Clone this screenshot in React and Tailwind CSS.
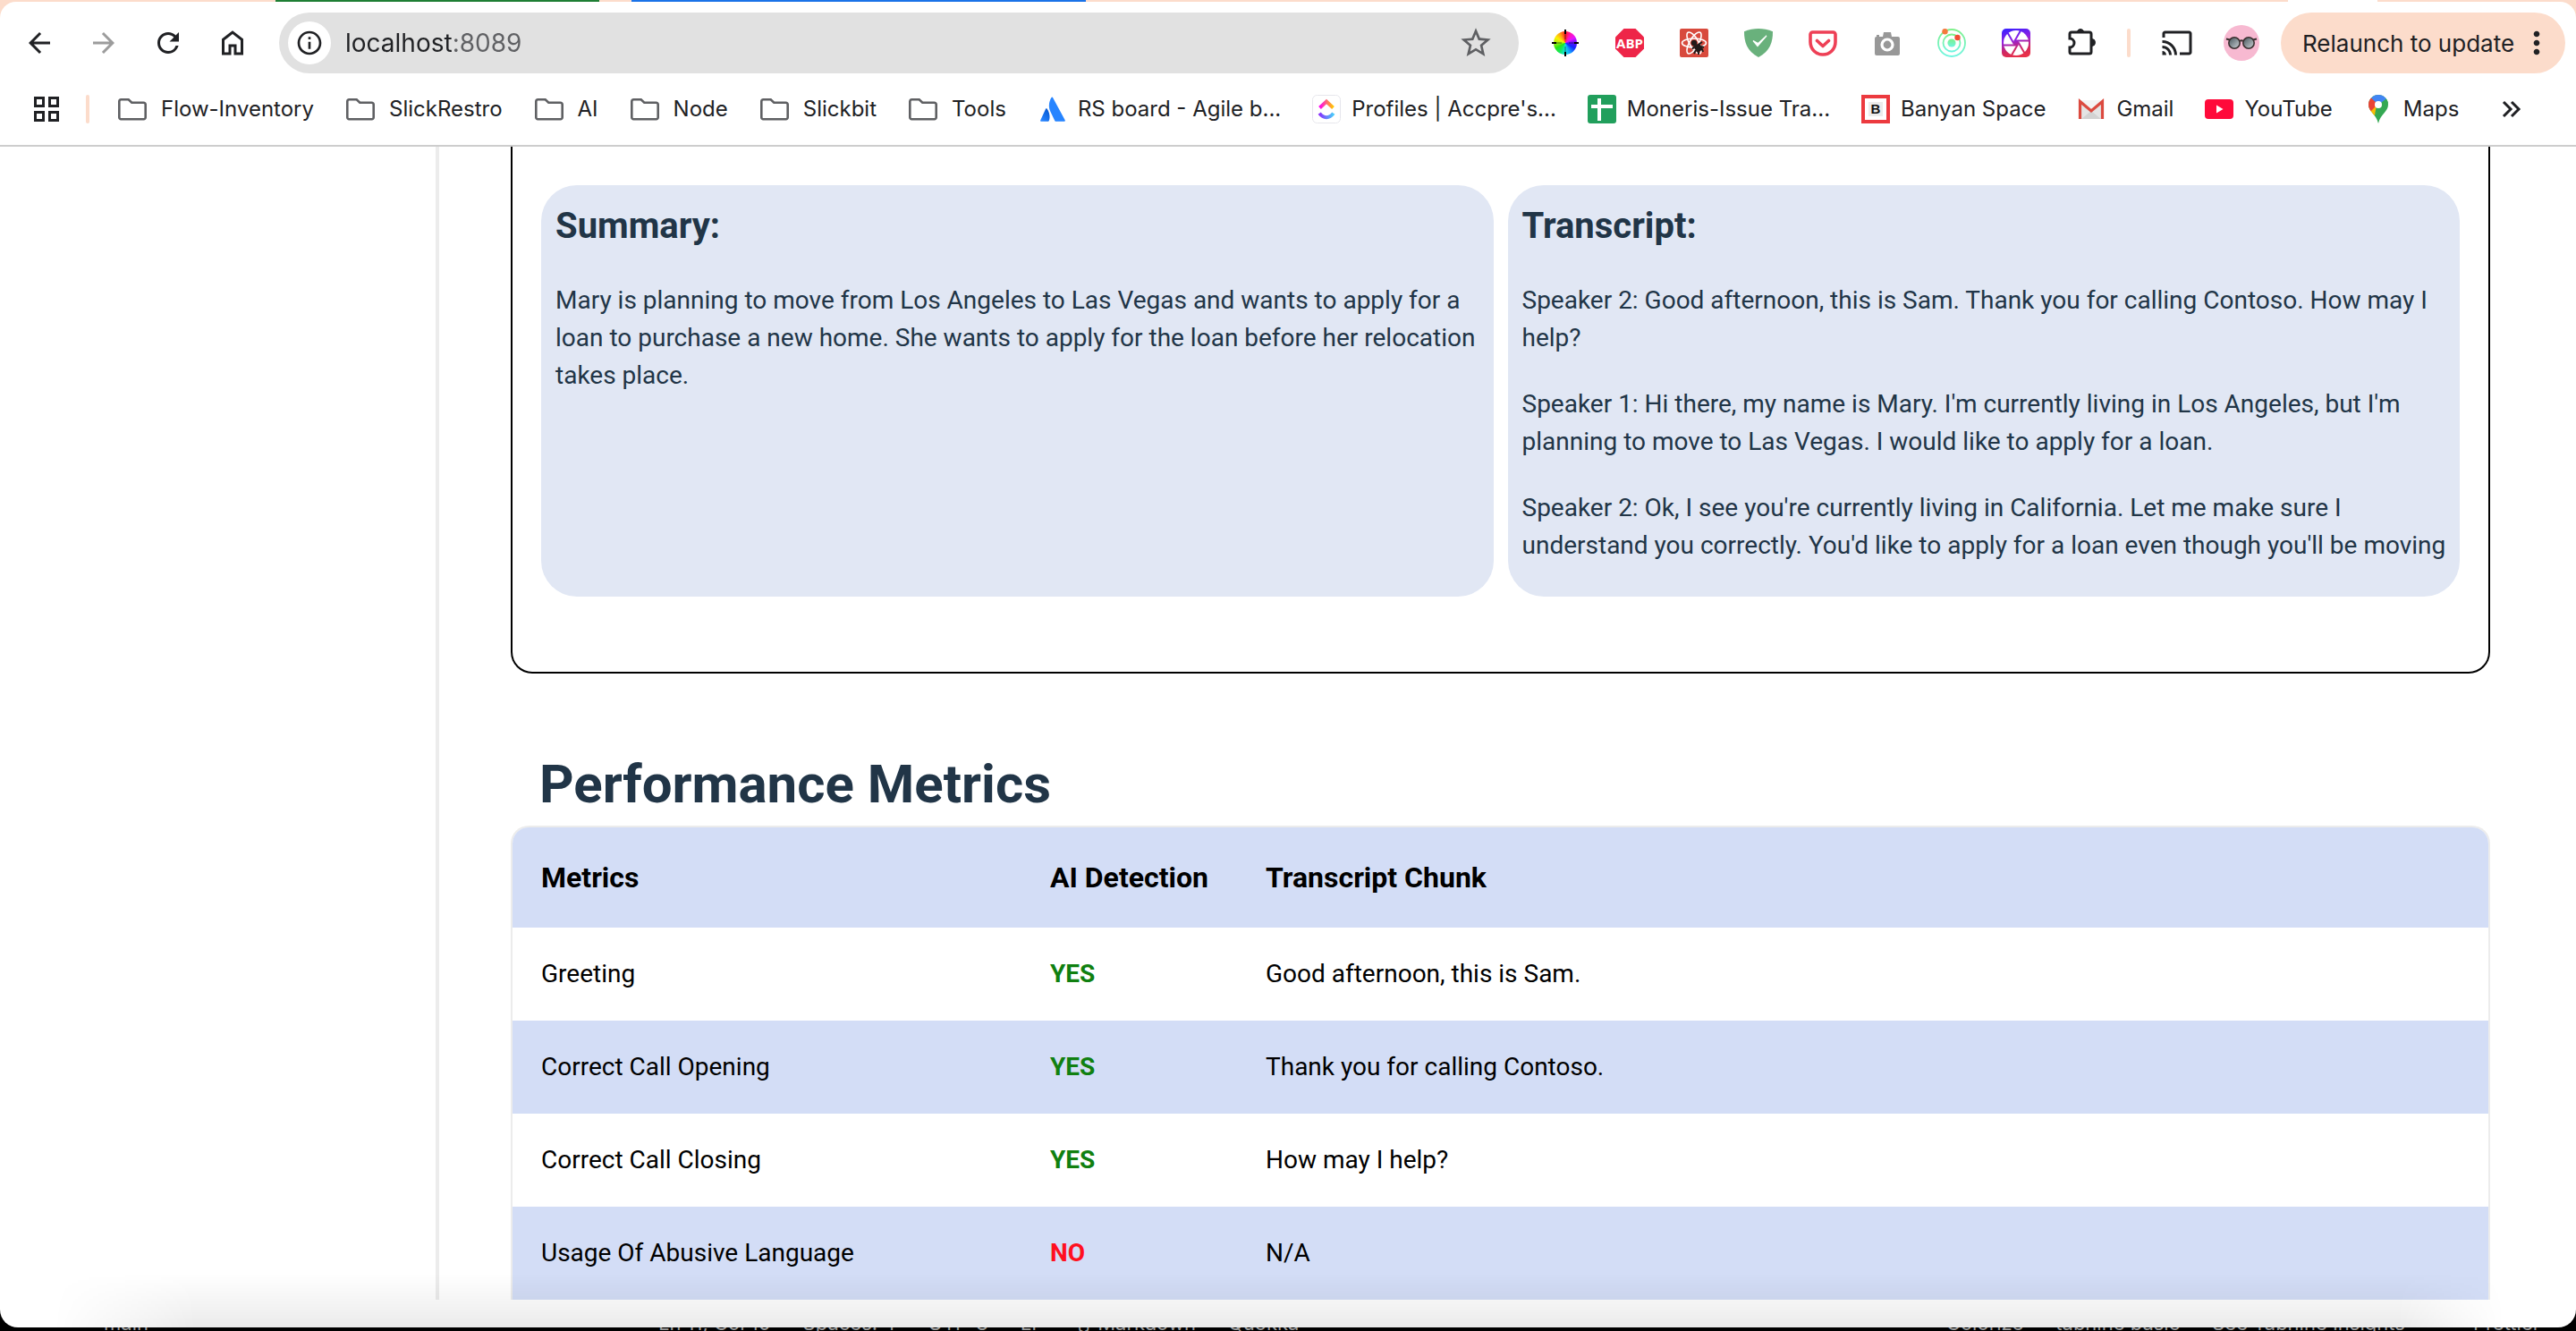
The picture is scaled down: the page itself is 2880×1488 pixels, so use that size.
import React from "react";
import { MdArrowBack, MdArrowForward, MdRefresh, MdInfoOutline, MdStarBorder, MdCast, MdMoreVert } from "react-icons/md";

/* ---------- toolbar icons ---------- */

const HomeIcon = () => (
  <svg viewBox="0 0 24 24" className="size-9" fill="currentColor" aria-hidden="true">
    <path d="M6 19h3v-6h6v6h3v-9l-6-4.6L6 10v9Zm-2 2V9l8-6.2L20 9v12h-7v-6h-2v6H4Z" />
  </svg>
);

const ColorWheelIcon = () => (
  <span className="grid size-8 place-items-center *:col-start-1 *:row-start-1" aria-hidden="true">
    <span className="size-[26px] rounded-full bg-[conic-gradient(#ff2020,#ff14b4,#e614ff,#5a14ff,#1428ff,#1496ff,#14e6e6,#14e664,#28e614,#a0f014,#fff000,#ffa014,#ff2020)]" />
    <svg viewBox="0 0 32 32" className="size-8">
      <path d="M16 1v5M16 26v5M1 16h5M26 16h5" stroke="#000" strokeWidth="2" />
      <path d="M16 6v6M16 20v6M6 16h6M20 16h6" stroke="#000" strokeOpacity=".5" strokeWidth="1" />
    </svg>
  </span>
);

const AdblockIcon = () => (
  <svg viewBox="0 0 32 32" className="size-8" aria-hidden="true">
    <path d="M9.500 0h13L32 9.500v13L22.500 32h-13L0 22.500v-13Z" fill="#ee2548" />
    <text x="16" y="22" textAnchor="middle" fill="#fff" className="font-['Open_Sans',sans-serif] text-[15px] font-bold">ABP</text>
  </svg>
);

const ReactSightIcon = () => (
  <svg viewBox="0 0 32 32" className="size-8" aria-hidden="true">
    <rect width="32" height="32" rx="2" fill="#d84a3d" />
    <g fill="none" stroke="#fff" strokeWidth="1.600">
      <ellipse cx="16" cy="16" rx="13.500" ry="5" />
      <ellipse cx="16" cy="16" rx="13.500" ry="5" transform="rotate(60 16 16)" />
      <ellipse cx="16" cy="16" rx="13.500" ry="5" transform="rotate(120 16 16)" />
    </g>
    <circle cx="16" cy="16" r="3.200" fill="#1f1a1a" />
    <path d="M15 20l7-4 4 7-6 4Z" fill="#1f1a1a" />
    <path d="M16 20l-2 3M18 24l-2 4M21 26l0 3M22 17l3-2M24 20l3 1M25 23l1 3" stroke="#1f1a1a" strokeWidth="2" />
  </svg>
);

const ShieldIcon = () => (
  <svg viewBox="0 0 32 32" className="size-8" aria-hidden="true">
    <path d="M16 0c5 0 11 1.200 16 3.200 0 12-3 22-16 28.800C3 25.200 0 15.200 0 3.200 5 1.200 11 0 16 0Z" fill="#69b17c" />
    <path d="M10 13.500l5 6L25 8l-9.600 8.600Z" fill="#fff" stroke="#fff" strokeWidth="1.200" />
  </svg>
);

const PocketIcon = () => (
  <svg viewBox="0 0 32 32" className="size-8" fill="none" stroke="#ee4056" aria-hidden="true">
    <path d="M4.500 4h23A2.500 2.500 0 0 1 30 6.500V15a14 14 0 0 1-28 0V6.500A2.500 2.500 0 0 1 4.500 4Z" strokeWidth="3.600" />
    <path d="M9.500 13.500l6.500 6 6.500-6" strokeWidth="3.600" strokeLinecap="round" strokeLinejoin="round" />
  </svg>
);

const CameraIcon = () => (
  <svg viewBox="0 0 32 32" className="size-8" aria-hidden="true">
    <path d="M4 9V7h3v2h4l1-5h8l1 5h7a2 2 0 0 1 2 2v17a2 2 0 0 1-2 2H4a2 2 0 0 1-2-2V11a2 2 0 0 1 2-2Z" fill="#989898" />
    <circle cx="16" cy="18" r="6" fill="none" stroke="#fff" strokeWidth="3.200" />
  </svg>
);

const OrbitIcon = () => (
  <svg viewBox="0 0 32 32" className="size-8" aria-hidden="true">
    <defs>
      <linearGradient id="orbit" x1="0" y1="0" x2="0" y2="1">
        <stop offset="0" stopColor="#7df08a" />
        <stop offset="1" stopColor="#6ff5e0" />
      </linearGradient>
    </defs>
    <circle cx="16" cy="16" r="15" fill="none" stroke="url(#orbit)" strokeWidth="1.800" />
    <circle cx="16" cy="16" r="9.500" fill="none" stroke="url(#orbit)" strokeWidth="1.800" />
    <circle cx="16" cy="16" r="4.600" fill="url(#orbit)" />
    <circle cx="8.500" cy="3.200" r="3.200" fill="#f4793c" />
    <circle cx="22.500" cy="10" r="3.200" fill="#f04e33" />
  </svg>
);

const ApertureIcon = () => (
  <svg viewBox="0 0 32 32" className="size-8" aria-hidden="true">
    <defs>
      <linearGradient id="aperture" gradientUnits="userSpaceOnUse" x1="8" y1="0" x2="16" y2="32">
        <stop offset="0" stopColor="#3d20ff" />
        <stop offset=".4" stopColor="#9020e0" />
        <stop offset=".75" stopColor="#d02860" />
        <stop offset="1" stopColor="#e83048" />
      </linearGradient>
      <mask id="blades">
        <circle cx="16" cy="16" r="14" fill="#fff" />
        <circle cx="16" cy="16" r="3" fill="#000" />
        {[0, 60, 120, 180, 240, 300].map((r) => (
          <path key={r} transform={`rotate(${r} 16 16)`} d="M16 18.500H1" stroke="#000" strokeWidth="2" />
        ))}
      </mask>
    </defs>
    <rect width="32" height="32" rx="5" fill="url(#aperture)" />
    <rect width="32" height="32" fill="#fff" mask="url(#blades)" />
  </svg>
);

const PuzzleIcon = () => (
  <svg viewBox="0 0 36 36" className="size-9" aria-hidden="true">
    <path d="M8 6h20a2 2 0 0 1 2 2v20a2 2 0 0 1-2 2H8a2 2 0 0 1-2-2v-5a5 5 0 0 0 0-10V8a2 2 0 0 1 2-2Z" fill="none" stroke="#202124" strokeWidth="3" />
    <path d="M14.500 5a3.700 3.700 0 0 1 7 0ZM30.500 13.500a4 4 0 0 1 0 8Z" fill="#202124" stroke="#202124" />
  </svg>
);

const GlassesAvatar = () => (
  <svg viewBox="0 0 40 40" className="size-10" aria-hidden="true">
    <defs>
      <linearGradient id="lens" x1="0" y1="0" x2="1" y2="1">
        <stop offset="0" stopColor="#44545a" />
        <stop offset="1" stopColor="#cfd4d8" />
      </linearGradient>
    </defs>
    <circle cx="20" cy="20" r="20" fill="#f7b9d1" />
    <g fill="url(#lens)" stroke="#3a3030" strokeWidth="1.600">
      <circle cx="12" cy="20" r="6.200" />
      <circle cx="28" cy="20" r="6.200" />
    </g>
    <path d="M18 18q2-1.600 4 0M3 15.500l4 1M37 15.500l-4 1" fill="none" stroke="#3a3030" strokeWidth="2" />
  </svg>
);

/* ---------- bookmark icons ---------- */

const AppsIcon = () => (
  <svg viewBox="0 0 28 28" className="size-7" fill="none" stroke="#202124" strokeWidth="3" aria-hidden="true">
    <path d="M1.500 1.500h9v9h-9zM17.500 1.500h9v9h-9zM1.500 17.500h9v9h-9zM17.500 17.500h9v9h-9z" />
  </svg>
);

const FolderIcon = () => (
  <svg viewBox="0 0 32 32" className="size-8 shrink-0" aria-hidden="true">
    <path d="M3.500 5.300h8.200l3.600 3.400h13.200A2.200 2.200 0 0 1 30.700 11v14.300a1.900 1.900 0 0 1-2 1.900H3.300a1.900 1.900 0 0 1-2-1.900V7.500a2.200 2.200 0 0 1 2.200-2.200Z" fill="none" stroke="#5f6063" strokeWidth="2.600" />
  </svg>
);

const AtlassianIcon = () => (
  <svg viewBox="0 0 32 32" className="size-8 shrink-0" aria-hidden="true">
    <defs>
      <linearGradient id="atl" x1="1" y1="0" x2="0.300" y2="1">
        <stop offset="0" stopColor="#0052cc" />
        <stop offset="1" stopColor="#2684ff" />
      </linearGradient>
    </defs>
    <path d="M9.500 15.500c-.4-.5-1-.5-1.300.1L2.200 28.500c-.3.600 0 1.200.7 1.200h8c.3 0 .7-.2.800-.5 1.800-3.800.7-9.800-2.200-13.700Z" fill="url(#atl)" />
    <path d="M14.500 3c-3.400 5.500-3.200 11.500-1 16l4.900 10.200c.1.300.4.500.8.500h9.900c.6 0 .9-.6.7-1.200L16 3c-.3-.7-1.100-.7-1.500 0Z" fill="#2684ff" />
  </svg>
);

const ClickUpIcon = () => (
  <svg viewBox="0 0 32 32" className="size-8 shrink-0" aria-hidden="true">
    <defs>
      <linearGradient id="cuTop" x1="0" y1="0" x2="1" y2="0">
        <stop offset="0" stopColor="#ff02f0" />
        <stop offset="1" stopColor="#ffc800" />
      </linearGradient>
      <linearGradient id="cuBottom" x1="0" y1="0" x2="1" y2="0">
        <stop offset="0" stopColor="#8930fd" />
        <stop offset="1" stopColor="#49ccf9" />
      </linearGradient>
    </defs>
    <rect x="0.500" y="0.500" width="31" height="31" rx="5" fill="#fff" stroke="#e6e6ec" />
    <path d="M8.500 14.500L16 7.500l7.500 7" fill="none" stroke="url(#cuTop)" strokeWidth="4" />
    <path d="M8.200 20.600q3.400 4.600 7.800 4.600t7.800-4.600" fill="none" stroke="url(#cuBottom)" strokeWidth="4" />
  </svg>
);

const SheetsIcon = () => (
  <svg viewBox="0 0 32 32" className="size-8 shrink-0" aria-hidden="true">
    <rect width="32" height="32" rx="3" fill="#219f5c" />
    <path d="M11 4h4v7h13v4H15v14h-4V15H4v-4h7Z" fill="#fff" />
  </svg>
);

const BanyanIcon = () => (
  <svg viewBox="0 0 32 32" className="size-8 shrink-0" aria-hidden="true">
    <rect x="2" y="2" width="28" height="28" fill="#fff" stroke="#ec3a3f" strokeWidth="4" />
    <rect x="8" y="8" width="16" height="16" fill="#ececec" />
    <text x="16" y="21" textAnchor="middle" fill="#111" className="font-['Liberation_Sans',sans-serif] text-[15px] font-bold">B</text>
  </svg>
);

const GmailIcon = () => (
  <svg viewBox="0 0 32 32" className="size-8 shrink-0" aria-hidden="true">
    <rect x="2" y="6" width="28" height="21" rx="1" fill="#e4e4e4" />
    <path d="M5 27l11-9 11 9Z" fill="#d2d2d2" />
    <path d="M2.500 6h27L16 17.500Z" fill="#f3f3f3" />
    <path d="M3.500 27V7.500L16 18 28.500 7.500V27" fill="none" stroke="#db4a3f" strokeWidth="3.200" />
  </svg>
);

const YouTubeIcon = () => (
  <svg viewBox="0 0 32 32" className="size-8 shrink-0" aria-hidden="true">
    <rect x="0" y="5" width="32" height="22" rx="4" fill="#ff0a3a" />
    <path d="M13 11.500v9l7.500-4.500Z" fill="#fff" />
  </svg>
);

const MapsIcon = () => (
  <svg viewBox="0 0 32 32" className="size-8 shrink-0" aria-hidden="true">
    <defs>
      <clipPath id="pin">
        <path d="M16 0a11 11 0 0 0-11 11c0 8 8.500 10 11 21 2.500-11 11-13 11-21A11 11 0 0 0 16 0Z" />
      </clipPath>
    </defs>
    <g clipPath="url(#pin)">
      <rect width="32" height="32" fill="#34a853" />
      <path d="M0 22L16 8l4 5L8 27Z" fill="#fbbc04" />
      <path d="M4 0L16 10 6 20 2 14Z" fill="#ea4335" />
      <path d="M25 2l3 6-16 14 2-10Z" fill="#34a853" />
      <path d="M8 3.500L16 11 25.500 4 16-3Z" fill="#4285f4" />
    </g>
    <circle cx="16" cy="11" r="4" fill="#fff" />
  </svg>
);

/* ---------- data ---------- */

const navButtons = [
  { label: "Back", icon: <MdArrowBack className="size-9" /> },
  { label: "Forward", icon: <MdArrowForward className="size-9 text-[#9c9c9c]" /> },
  { label: "Reload", icon: <MdRefresh className="size-9" /> },
  { label: "Home", icon: <HomeIcon /> },
];

const extensions = [
  { label: "Color picker", icon: <ColorWheelIcon /> },
  { label: "Adblock", icon: <AdblockIcon /> },
  { label: "React inspector", icon: <ReactSightIcon /> },
  { label: "Ad guard", icon: <ShieldIcon /> },
  { label: "Pocket", icon: <PocketIcon /> },
  { label: "Screenshot", icon: <CameraIcon /> },
  { label: "Orbit", icon: <OrbitIcon /> },
  { label: "Aperture", icon: <ApertureIcon /> },
  { label: "Extensions", icon: <PuzzleIcon /> },
];

const folders = ["Flow-Inventory", "SlickRestro", "AI", "Node", "Slickbit", "Tools"];

const sites = [
  { label: "RS board - Agile b...", icon: <AtlassianIcon /> },
  { label: "Profiles | Accpre's...", icon: <ClickUpIcon /> },
  { label: "Moneris-Issue Tra...", icon: <SheetsIcon /> },
  { label: "Banyan Space", icon: <BanyanIcon /> },
  { label: "Gmail", icon: <GmailIcon /> },
  { label: "YouTube", icon: <YouTubeIcon /> },
  { label: "Maps", icon: <MapsIcon /> },
];

const transcript = [
  "Speaker 2: Good afternoon, this is Sam. Thank you for calling Contoso. How may I help?",
  "Speaker 1: Hi there, my name is Mary. I'm currently living in Los Angeles, but I'm planning to move to Las Vegas. I would like to apply for a loan.",
  "Speaker 2: Ok, I see you're currently living in California. Let me make sure I understand you correctly. You'd like to apply for a loan even though you'll be moving",
];

const metrics = [
  { name: "Greeting", yes: true, chunk: "Good afternoon, this is Sam." },
  { name: "Correct Call Opening", yes: true, chunk: "Thank you for calling Contoso." },
  { name: "Correct Call Closing", yes: true, chunk: "How may I help?" },
  { name: "Usage Of Abusive Language", yes: false, chunk: "N/A" },
];

/* ---------- sections ---------- */

function TabStrip() {
  return (
    <div className="flex h-0.5 bg-[#fcdccb]">
      <div className="ml-[308px] w-[362px] bg-[#1e7e34]" />
      <div className="ml-9 w-[508px] bg-[#1a73e8]" />
      <div className="mr-[222px] ml-auto w-[100px] bg-white" />
    </div>
  );
}

function Toolbar() {
  return (
    <div className="flex h-[92px] items-center pl-2 pr-3 text-[#202124]">
      {navButtons.map((b) => (
        <button key={b.label} type="button" aria-label={b.label} className="flex w-[72px] shrink-0 justify-center">
          {b.icon}
        </button>
      ))}
      <div className="mx-4 flex h-[68px] flex-1 items-center rounded-full bg-[#e1e1e1] pr-7 pl-2.5">
        <button type="button" aria-label="View site information" className="flex size-12 items-center justify-center rounded-full bg-white">
          <MdInfoOutline className="size-8" />
        </button>
        <input
          aria-label="Address"
          defaultValue="localhost:8089"
          className="ml-4 flex-1 bg-[linear-gradient(90deg,#202124_121px,#5f6063_121px)] bg-clip-text text-[28px] leading-[40px] text-transparent outline-none"
        />
        <button type="button" aria-label="Bookmark this tab">
          <MdStarBorder className="size-10 text-[#5f6063]" />
        </button>
      </div>
      {extensions.map((e) => (
        <button key={e.label} type="button" aria-label={e.label} className="flex w-[72px] shrink-0 justify-center">
          {e.icon}
        </button>
      ))}
      <span className="mx-4 h-8 w-1 rounded-full bg-[#fcdccb]" />
      <button type="button" aria-label="Cast" className="flex w-[72px] shrink-0 justify-center">
        <MdCast className="size-9" />
      </button>
      <button type="button" aria-label="Profile" className="flex w-[72px] shrink-0 justify-center">
        <GlassesAvatar />
      </button>
      <button type="button" className="ml-2 flex h-[68px] w-[318px] shrink-0 items-center justify-between rounded-full bg-[#fcdccb] pr-3 pl-6 text-[26px] whitespace-nowrap">
        Relaunch to update
        <MdMoreVert className="size-10" />
      </button>
    </div>
  );
}

function BookmarksBar() {
  return (
    <nav aria-label="Bookmarks" className="flex h-[68px] items-center pb-3 pl-[38px] text-2xl whitespace-nowrap text-[#202124]">
      <button type="button" aria-label="Apps">
        <AppsIcon />
      </button>
      <span className="mr-8 ml-[30px] h-8 w-1 rounded-full bg-[#fcdccb]" />
      {folders.map((f) => (
        <button key={f} type="button" className="mr-9 flex items-center gap-4">
          <FolderIcon />
          {f}
        </button>
      ))}
      {sites.map((s) => (
        <a key={s.label} href="#" className="mr-[35px] flex items-center gap-3">
          {s.icon}
          {s.label}
        </a>
      ))}
      <button type="button" aria-label="More bookmarks" className="ml-auto pr-[60px]">
        <svg viewBox="0 0 24 24" className="size-6" fill="none" stroke="#202124" strokeWidth="3" aria-hidden="true">
          <path d="M3 4l8 8-8 8M12 4l8 8-8 8" />
        </svg>
      </button>
    </nav>
  );
}

function Panel({ title, children }) {
  return (
    <section className="min-h-[460px] flex-1 rounded-[40px] bg-[#e1e7f4] pt-4 pr-3 pl-4 text-[#213547]">
      <h2 className="text-[40px] leading-[60px] font-bold">{title}</h2>
      <div className="mt-8 space-y-8 text-[28px] leading-[42px]">{children}</div>
    </section>
  );
}

function MetricsTable() {
  return (
    <div className="overflow-hidden rounded-t-[20px] border-2 border-b-0 border-[#ececec]">
      <table className="w-full table-fixed text-left text-[28px] leading-[40px] text-black">
        <thead className="bg-[#d3ddf6] text-[32px] leading-[48px]">
          <tr>
            <th className="w-[569px] py-8 pl-8 font-bold">Metrics</th>
            <th className="w-[241px] py-8 pl-8 font-bold whitespace-nowrap">AI Detection</th>
            <th className="py-8 pl-8 font-bold">Transcript Chunk</th>
          </tr>
        </thead>
        <tbody>
          {metrics.map((m) => (
            <tr key={m.name} className="even:bg-[#d3ddf6]">
              <td className="py-8 pl-8">{m.name}</td>
              <td className={m.yes ? "py-8 pl-8 font-bold text-[#108010]" : "py-8 pl-8 font-bold text-[#ff1020]"}>{m.yes ? "YES" : "NO"}</td>
              <td className="py-8 pl-8">{m.chunk}</td>
            </tr>
          ))}
        </tbody>
      </table>
    </div>
  );
}

export default function App() {
  return (
    <div className="flex min-h-screen flex-col bg-black font-['Inter',sans-serif]">
      <div className="bg-[#fcdccb]">
        <TabStrip />
        <header className="rounded-t-[18px] border-b-2 border-[#cdcdcd] bg-white">
          <Toolbar />
          <BookmarksBar />
        </header>
      </div>

      <div className="relative flex-1 overflow-hidden rounded-b-[20px] bg-white pb-[29px] font-['Roboto',sans-serif]">
        <div className="flex">
          <aside className="w-[491px] shrink-0 border-r-4 border-[#ececec]" />
          <main className="flex-1 pr-24 pl-20">
            <div className="flex gap-4 rounded-b-3xl border-x-2 border-b-2 border-black px-8 pt-[43px] pb-[84px]">
              <Panel title="Summary:">
                <p>
                  Mary is planning to move from Los Angeles to Las Vegas and wants to apply for a loan to purchase a new home. She wants to
                  apply for the loan before her relocation takes place.
                </p>
              </Panel>
              <Panel title="Transcript:">
                {transcript.map((t) => (
                  <p key={t}>{t}</p>
                ))}
              </Panel>
            </div>
            <h1 className="mt-[88px] mb-2.5 pl-8 text-[60px] leading-[72px] font-bold text-[#213547]">Performance Metrics</h1>
            <MetricsTable />
          </main>
        </div>
        <div className="pointer-events-none absolute inset-x-0 bottom-0 h-[60px] bg-linear-to-b from-transparent to-black/8 mask-[linear-gradient(90deg,transparent_60px,black_220px,black_2680px,transparent_2800px)]" />
      </div>

      <footer className="flex h-1 items-end gap-9 overflow-hidden pl-[116px] text-[22px] leading-[18px] whitespace-nowrap text-[#9a9a9a]">
        <span>main</span>
        <span className="ml-[534px]">Ln 11, Col 10</span>
        <span>Spaces: 4</span>
        <span>UTF-8</span>
        <span>LF</span>
        <span>{"{} Markdown"}</span>
        <span>Quokka</span>
        <span className="ml-auto">Colorize</span>
        <span>tabnine basic</span>
        <span>See Tabnine Insights</span>
        <span className="mr-10 ml-10">Prettier</span>
      </footer>
    </div>
  );
}
